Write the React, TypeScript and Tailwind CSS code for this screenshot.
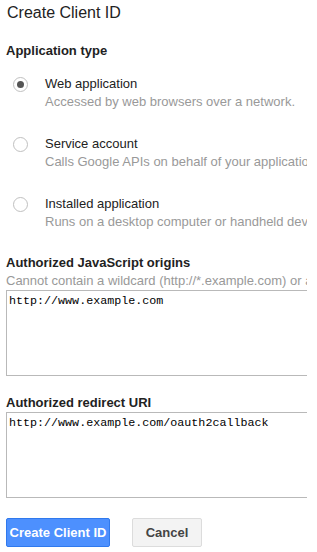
export default function App() {
  const types = [
    { label: 'Web application', desc: 'Accessed by web browsers over a network.', checked: true },
    { label: 'Service account', desc: 'Calls Google APIs on behalf of your application instead of an end-user.', checked: false },
    { label: 'Installed application', desc: 'Runs on a desktop computer or handheld device (like Android or iPhone).', checked: false },
  ];

  return (
    <div className="w-[317px] h-[552px] overflow-hidden bg-white font-['Liberation_Sans',Arial,sans-serif] text-[#222]">
      <div className="w-[307px] overflow-hidden whitespace-nowrap pl-[6px]">
        <h1 className="mt-[3px] text-[16px] leading-[19px] pl-[1px]">Create Client ID</h1>

        <h2 className="mt-[20px] text-[13px] leading-[18px] font-bold">Application type</h2>

        <div className="mt-[15px] flex flex-col gap-[24px]">
          {types.map((t) => (
            <div key={t.label} className="flex">
              <div className="w-[39px] shrink-0 pl-[7px] pt-[2px]">
                <div className="w-[15px] h-[15px] rounded-full border border-[#c0c0c0] bg-white flex items-center justify-center">
                  {t.checked && <div className="w-[7px] h-[7px] rounded-full bg-[#555]" />}
                </div>
              </div>
              <div className="min-w-0 text-[13px] leading-[18px]">
                <div className="text-[#222]">{t.label}</div>
                <div className="text-[#999]">{t.desc}</div>
              </div>
            </div>
          ))}
        </div>

        <h2 className="mt-[23px] text-[13px] leading-[18px] font-bold">Authorized JavaScript origins</h2>
        <div className="text-[13px] leading-[18px] text-[#999]">
          Cannot contain a wildcard (http://*.example.com) or a path (http://example.com/subdir).
        </div>
        <textarea
          readOnly
          defaultValue="http://www.example.com"
          className="block w-[310px] h-[86px] resize-none border border-[#b9b9b9] px-[2px] pt-[3px] font-['Liberation_Mono',monospace] text-[11.7px] leading-[15px] text-black outline-none"
        />

        <h2 className="mt-[18px] text-[13px] leading-[18px] font-bold">Authorized redirect URI</h2>
        <textarea
          readOnly
          defaultValue="http://www.example.com/oauth2callback"
          className="block w-[310px] h-[86px] resize-none border border-[#b9b9b9] px-[2px] pt-[3px] font-['Liberation_Mono',monospace] text-[11.7px] leading-[15px] text-black outline-none"
        />

        <div className="mt-[20px] flex gap-[22px]">
          <button className="w-[104px] h-[29px] rounded-[2px] border border-[#3079ed] bg-[#4d90fe] text-[13px] font-bold text-white">
            Create Client ID
          </button>
          <button className="w-[70px] h-[29px] rounded-[2px] border border-[#dcdcdc] bg-[#f3f3f3] text-[13px] font-bold text-[#444]">
            Cancel
          </button>
        </div>
      </div>
    </div>
  );
}
